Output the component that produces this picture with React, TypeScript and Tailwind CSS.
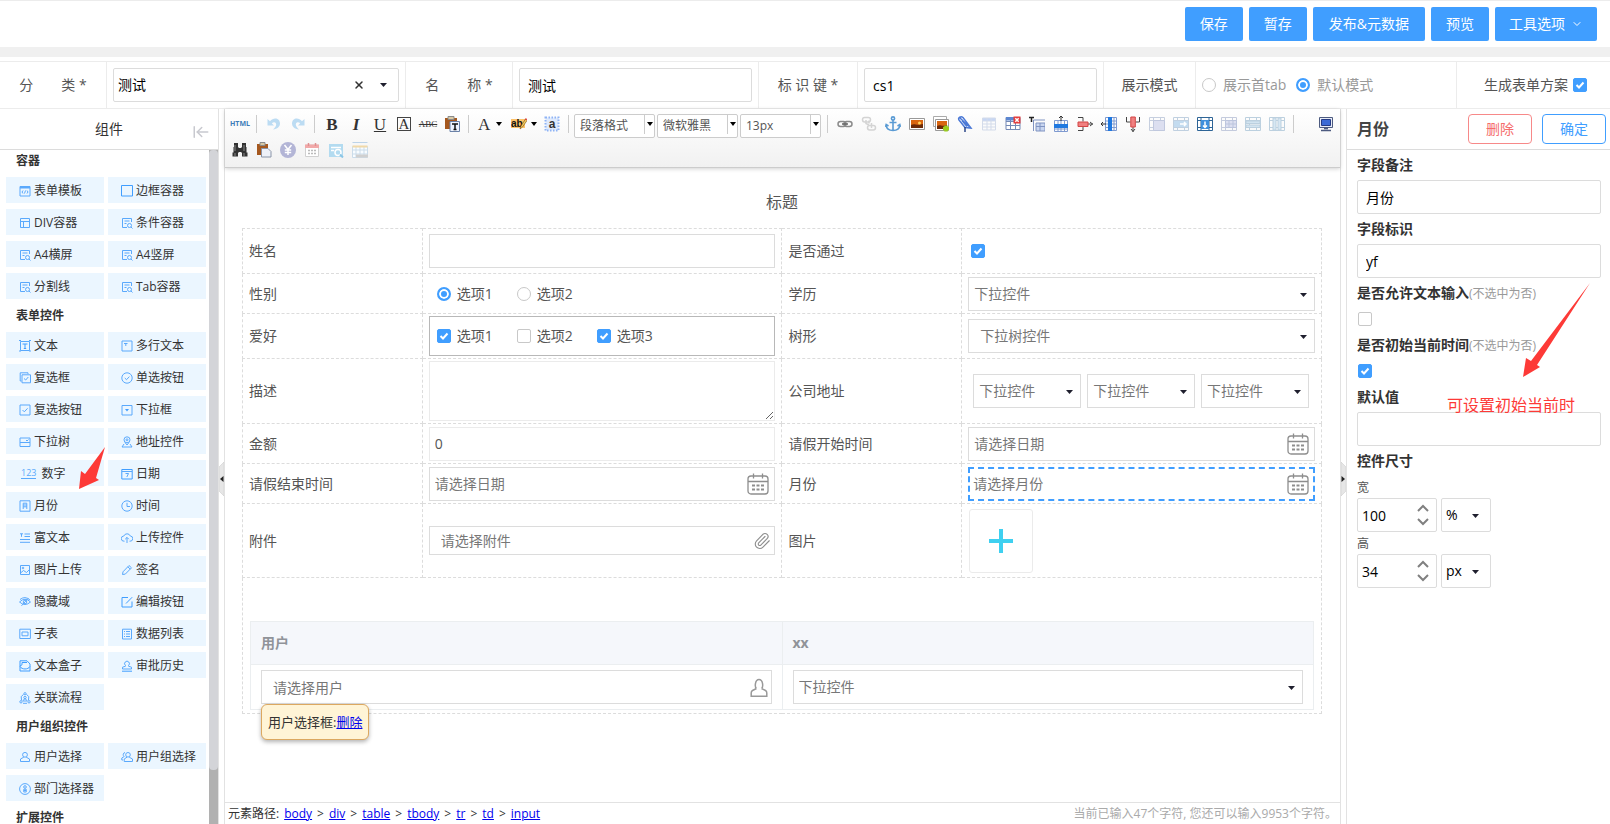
import { useId, useState } from 'react';
import type { ReactNode } from 'react';
import { ArrowLeftToLine, ChevronDown, Paperclip, X } from 'lucide-react';

/* ---------- palette icons (12 x 12 grid) ---------- */

const paletteIcons: Record<string, ReactNode> = {
  template: (
    <>
      <path d="M1 1.5h10v9.5H1z" />
      <path d="M1 2.5h10" strokeWidth="2" />
      <path d="M4 5.5 3 7l1 1.5M8 5.5 9 7 8 8.5M6.5 5.5l-1 3" />
    </>
  ),
  border: <path d="M.5 .5h11v10.5H.5z" stroke="#409eff" />,
  div: <path d="M1.5 1.5h9v9h-9zM1.5 4.5h9M4.5 4.5v6" />,
  query: (
    <>
      <path d="M6 10.5H1.5v-9h9V5" />
      <path d="M3.5 4h5M3.5 6.5h2" />
      <circle cx="8.5" cy="8.5" r="2" />
      <path d="m10 10 1.5 1.5" />
    </>
  ),
  text: (
    <>
      <path d="M1.5 1.5h9v9h-9z" />
      <path d="M0 .5h2M10 .5h2M0 11h2M10 11h2" />
      <path d="M3.5 4h5M6 4v4.500M4.800 8.500h2.400" stroke="#409eff" />
    </>
  ),
  textarea: <path d="M1 1h10v10H1zM3 3.500h3.500M4.800 3.500V6" />,
  checkGroup: <path d="M9 2V.8H1.200V9h1.300M3 2.800h8.500v8H3zM5 6.500 6.700 8l2.600-3" />,
  radio: (
    <>
      <circle cx="6" cy="6" r="5.200" />
      <path d="m3.800 6 1.700 1.700L8.400 4.600" />
    </>
  ),
  check: <path d="M1 1h10v10H1zM3.500 6l1.800 1.800 3.300-3.500" />,
  dropdown: (
    <>
      <path d="M1 1.500h10v9.500H1z" />
      <path d="M4 5h4L6 7.500z" fill="#409eff" stroke="none" />
    </>
  ),
  tree: <path d="M1 2h10v8.500H1zM1 6.500h10M7 4l1 1 1.500-1.500" />,
  address: (
    <>
      <circle cx="6" cy="3.800" r="3" />
      <circle cx="6" cy="3.800" r="1" />
      <path d="M4 6.500 6 9l2-2.500M3 8 1 11h10L9 8" />
    </>
  ),
  date: (
    <>
      <path d="M.8 1.500h10.400V11H.8z" stroke="#409eff" />
      <path d="M1 3.500h10M4.500 5.500h3L5.800 9" />
    </>
  ),
  month: <path d="M1 .8h10v10.400H1zM4.200 9V3.200h3.600V9M4.200 5h3.600M4.200 6.800h3.600" />,
  time: (
    <>
      <circle cx="6" cy="6" r="5.200" />
      <path d="M6 2.800V6.500h3" />
    </>
  ),
  rich: <path d="M1 1.800h3M2.500 1.800v3M5.500 2h5.500M5.500 4.500H11M1 7.500h10M1 10.300h10" />,
  upload: <path d="M3.500 9.200H3A2.600 2.600 0 0 1 2.800 4 3.500 3.500 0 0 1 9.300 4 2.600 2.600 0 0 1 9 9.200h-.5M6 11V5.500M4.200 7.200 6 5.400l1.800 1.800" />,
  image: (
    <>
      <path d="M1.500 1.500h9v9h-9zM1.500 9l3-2.500 3 2 3-3" />
      <circle cx="4" cy="4" r=".8" />
    </>
  ),
  pen: <path d="M1.500 10.500 2 7.800 8 1.500l2.500 2.300-6.200 6.300zM6.800 2.800l2.400 2.300" />,
  hidden: (
    <>
      <path d="M.5 6Q6 .5 11.500 6 6 11 .5 6zM1 3.500Q6-.5 11 4M2.500 9.800 9.500 2" />
      <circle cx="6" cy="6" r="1.800" />
    </>
  ),
  edit: <path d="M11 5.500V11H1V1.500h6M5 7.500 11.200 1.200" stroke="#409eff" />,
  subtable: <path d="M.8 1.200h10.600v9.300H.8zM3 4h6v3.800H3z" />,
  list: <path d="M1.500 1.200h9v9.800h-9zM3 3.500h1M5 3.500h4M3 6h1M5 6h4M3 8.500h1M5 8.500h4" />,
  box: <path d="M4 .8H1V11h10V4L8 .8H4zM1 6l2-1.200V2.500h5M1 6.500C3 9.800 9 9.800 11 6.500" stroke="#409eff" />,
  stamp: (
    <>
      <path d="M4.500 6.200V5.500a2.400 2.400 0 1 1 3 0v.7l3 1V9h-9V7.200z" />
      <path d="M1 11.200h10" stroke="#409eff" />
    </>
  ),
  flow: (
    <>
      <path d="M2.500 8A4.500 4.500 0 0 1 4.500 2.300M9.500 8a4.500 4.500 0 0 0-2-5.700M4 11.300h4" />
      <circle cx="6" cy="1.700" r="1.100" />
      <circle cx="2" cy="9.800" r="1.200" />
      <circle cx="10" cy="9.800" r="1.200" />
      <circle cx="6" cy="5.500" r="1.200" />
      <path d="M4 9c0-2.500 4-2.500 4 0z" />
    </>
  ),
  user: (
    <>
      <circle cx="6" cy="3.800" r="2.400" />
      <path d="M4.800 6.200 1.500 8v2.500h9V8L7.200 6.200" />
    </>
  ),
  users: (
    <>
      <circle cx="7" cy="3.800" r="2.300" />
      <path d="M6 6.200 3.200 8v2.500h8.300V8L8.200 6.200M4 1.500a2.200 2.200 0 0 0-.8 4L.8 7v2H2" />
    </>
  ),
  dept: (
    <>
      <circle cx="6" cy="6" r="5.400" />
      <circle cx="6" cy="4" r="1.300" />
      <path d="M4.800 6.200h2.400V9H4.800zM4.800 7.500h2.400" />
    </>
  ),
};

function PaletteIcon({ name }: { name: string }) {
  if (name === 'number') {
    return <span className="mx-0.5 border-b border-[#5aa9fc] text-[9px] leading-[10px] text-[#5aa9fc]">123</span>;
  }
  return (
    <svg viewBox="0 0 12 12" className="h-3 w-3 shrink-0" fill="none" stroke="#5aa9fc" strokeWidth="1">
      {paletteIcons[name]}
    </svg>
  );
}

const groups: { title: string; items: [string, string][] }[] = [
  {
    title: '容器',
    items: [
      ['template', '表单模板'], ['border', '边框容器'],
      ['div', 'DIV容器'], ['query', '条件容器'],
      ['query', 'A4横屏'], ['query', 'A4竖屏'],
      ['query', '分割线'], ['query', 'Tab容器'],
    ],
  },
  {
    title: '表单控件',
    items: [
      ['text', '文本'], ['textarea', '多行文本'],
      ['checkGroup', '复选框'], ['radio', '单选按钮'],
      ['check', '复选按钮'], ['dropdown', '下拉框'],
      ['tree', '下拉树'], ['address', '地址控件'],
      ['number', '数字'], ['date', '日期'],
      ['month', '月份'], ['time', '时间'],
      ['rich', '富文本'], ['upload', '上传控件'],
      ['image', '图片上传'], ['pen', '签名'],
      ['hidden', '隐藏域'], ['edit', '编辑按钮'],
      ['subtable', '子表'], ['list', '数据列表'],
      ['box', '文本盒子'], ['stamp', '审批历史'],
      ['flow', '关联流程'],
    ],
  },
  {
    title: '用户组织控件',
    items: [['user', '用户选择'], ['users', '用户组选择'], ['dept', '部门选择器']],
  },
  { title: '扩展控件', items: [] },
];

/* ---------- toolbar icons (16 x 16 grid) ---------- */

const cells = 'M1 1.500h14v12H1zM1 5.500h14M1 9.500h14M5.500 1.500v12M10.500 1.500v12';
const film = 'M.5 1.500h15v13H.5zM.5 4.500h15M.5 11.500h15M4.500 1.500v13M11.500 1.500v3M11.500 11.500v3';

const toolIcons: Record<string, ReactNode> = {
  undo: <path d="M1.500 3v6.500H8L5.800 7.300C8 5 11 6.500 10 9.500c-.4 1.500-1.500 2.500-3 4C11.500 13 14 10.500 14 7.500 14 2.500 8 .5 4 5.200z" fill="#bcdcf3" />,
  redo: <path d="M14.500 3v6.500H8l2.200-2.200C8 5 5 6.500 6 9.500c.4 1.500 1.500 2.500 3 4C4.500 13 2 10.500 2 7.500 2 2.500 8 .5 12 5.200z" fill="#bcdcf3" />,
  pasteText: (
    <>
      <path d="M1 2h12v11H1z" fill="#a5581e" />
      <path d="M4 .5h6v3H4z" fill="#d9c9a5" stroke="#8a8a8a" />
      <path d="M6 5.500h9.500v10H6z" fill="#eef4ff" stroke="#6b82a8" />
      <path d="M8 8h6M11 8v5.500M9.500 13.500h3" stroke="#111" strokeWidth="1.500" />
    </>
  ),
  clear: (
    <>
      <path d="M1.500 1.500h13v13h-13z" fill="#dfeafd" stroke="#8fb4f5" strokeWidth="2" strokeDasharray="1.500 1.500" />
      <text x="8" y="12" textAnchor="middle" fontSize="12" fontWeight="bold" fill="#333" fontFamily="Liberation Sans, sans-serif">a</text>
    </>
  ),
  highlight: (
    <>
      <path d="M0 3h14v9H0z" fill="#fdc36b" />
      <text x="0" y="11" fontSize="10" fontWeight="bold" fill="#111" fontFamily="Liberation Sans, sans-serif">ab</text>
      <path d="m9 13 1-3 4.500-7L16 4.500 11.500 11z" fill="#f0d060" stroke="#8a5a1c" strokeWidth=".7" />
      <path d="m14 3 1-1 1 1.500-.8 1z" fill="#d33" />
    </>
  ),
  link: (
    <g fill="none" stroke="#8b8b8b" strokeWidth="1.500">
      <rect x="1" y="5.500" width="8" height="5" rx="2.500" />
      <rect x="7" y="5.500" width="8" height="5" rx="2.500" />
      <path d="M5 8h6" stroke="#666" />
    </g>
  ),
  unlink: (
    <g fill="none" stroke="#d4d4d4" strokeWidth="1.500">
      <rect x="1.500" y="1.500" width="8" height="4.500" rx="2.200" />
      <path d="M5 4v3.500l3 1.500M8 4.500v3" />
      <rect x="6.500" y="9.500" width="8" height="4.500" rx="2.200" />
      <path d="M10.500 7v5" />
    </g>
  ),
  anchor: (
    <g fill="none" stroke="#5a9bd4" strokeWidth="1.600">
      <circle cx="8" cy="2.500" r="1.600" />
      <path d="M8 4v11M4.500 6.500h7M1 9c.5 4 3.500 5.500 7 5.500s6.500-1.500 7-5.500M.5 11 1.200 8.500 3.500 10M15.500 11l-.7-2.500L12.500 10" />
    </g>
  ),
  image: (
    <>
      <path d="M.5 2.500h15v11H.5z" fill="#fff" stroke="#999" />
      <path d="M2 4h12v8H2z" fill="#d9650f" />
      <path d="M2 9c4-2 5 1 12-1v4H2z" fill="#6b2a08" />
      <circle cx="10.500" cy="7" r="1.500" fill="#ffd65c" />
    </>
  ),
  images: (
    <>
      <path d="M.5 .5h13v10H.5z" fill="#fff" stroke="#aaa" />
      <path d="M2.500 3.500h13v11h-13z" fill="#fff" stroke="#999" />
      <path d="M4 5h10v8H4z" fill="#d9650f" />
      <path d="M4 10c4-2 4 1 10-1v4H4z" fill="#6b2a08" />
      <path d="M13 9.500v6M10 12.500h6" stroke="#9acd1c" strokeWidth="3.500" />
    </>
  ),
  attach: (
    <g fill="none" stroke="#4a78d6" strokeWidth="1.500">
      <path d="m3 2 9 8.500M2 4l6 7.500 6 .5L6 1.500C4 0 .5 1.500 2 4zM5 4.500l5 6" />
      <path d="M8 11v5" stroke="#2b4687" />
    </g>
  ),
  table: (
    <>
      <path d="M1.500 2h13v3h-13z" fill="#c6d6f5" />
      <path d="M1.500 2h13v12h-13zM1.500 5h13M1.500 8h13M1.500 11h13M6 2v12M10 2v12" fill="none" stroke="#d3dbea" />
    </>
  ),
  deleteTable: (
    <>
      <path d={cells} fill="#fff" stroke="#7489b5" />
      <path d="M1 1h9v3.500H1z" fill="#5b86d0" />
      <path d="M8.500 .5h7v7h-7z" fill="#e33b3b" />
      <path d="m10.300 2.300 3.400 3.400M13.700 2.300l-3.400 3.400" stroke="#fff" strokeWidth="1.500" />
    </>
  ),
  tableTitle: (
    <>
      <path d="M0 1.500h5M2.500 1.500V6" stroke="#222" strokeWidth="1.500" />
      <path d="M4.500 4h11.500M4.500 4v11M7 7h9v8H7zM7 10.500h9M11 7v8" fill="#c9d6f0" stroke="#8094c2" />
    </>
  ),
  insertRow: (
    <>
      <path d="M1.500 4.500h13v11h-13zM1.500 13h13M5 4.500v11M8 4.500v11M11.500 4.500v11" fill="none" stroke="#7f9ad0" />
      <path d="M1 8h14v4H1z" fill="#1f78e0" />
      <path d="M8 5V0M6 2l2-2 2 2" fill="none" stroke="#333" />
    </>
  ),
  deleteRow: (
    <>
      <path d="M1 1.500h5v4M1 14.500h5v-4M13 6l2.500 2L13 10M11 8h5" fill="none" stroke="#444" />
      <path d="M1 6h10v4.500H1z" fill="#f08080" stroke="#d24545" />
    </>
  ),
  insertCol: (
    <>
      <path d="M4.500 1.500h11v13h-11zM4.500 5h11M4.500 8h11M4.500 11.500h11M13 1.500v13" fill="none" stroke="#7f9ad0" />
      <path d="M7 1h4v14H7z" fill="#1f78e0" />
      <path d="M5 8H0M2 6 0 8l2 2" fill="none" stroke="#333" />
    </>
  ),
  deleteCol: (
    <>
      <path d="M1.500 1v5h4M14.500 1v5h-4M6 13l2 2.500 2-2.500M8 11v5" fill="none" stroke="#444" />
      <path d="M5.800 1h4.500v10H5.800z" fill="#f08080" stroke="#d24545" />
    </>
  ),
  mergeCells: (
    <>
      <path d={film} fill="none" stroke="#c6cfdf" />
      <path d="M4.500 4.500h11v10h-11z" fill="#dcdff0" stroke="#c0c8de" />
    </>
  ),
  mergeRight: (
    <>
      <path d={film} fill="none" stroke="#c0d0e0" />
      <path d="M1 5h14v6H1z" fill="#c3dbef" />
      <path d="M7 8h6M11 6l2 2-2 2" fill="none" stroke="#fff" strokeWidth="1.500" />
    </>
  ),
  mergeDown: (
    <>
      <path d="M.5 1.500h15v13H.5z" fill="#fff" stroke="#2e6496" />
      <path d="M.5 4.500h15M.5 11.500h15M4 1.500v13M12 1.500v13" stroke="#2e6496" />
      <path d="M4 4h8v9H4z" fill="#3f8fdc" />
      <path d="M8 5.500v6M6 9.500l2 2 2-2" fill="none" stroke="#fff" strokeWidth="1.500" />
    </>
  ),
  splitCells: (
    <>
      <path d={film} fill="none" stroke="#c4cbdd" />
      <path d="M4.500 4.500h11v7h-11zM8 4.500v7M12 4.500v7M4.500 8h11" fill="#dcdff0" stroke="#bcc5dd" />
    </>
  ),
  splitRows: (
    <>
      <path d={film} fill="none" stroke="#bcd0df" />
      <path d="M1 5h14v2.500H1zM1 9h14v2.500H1z" fill="#d2e4f1" stroke="#bcd0df" />
    </>
  ),
  splitCols: (
    <>
      <path d={film} fill="none" stroke="#bcd0df" />
      <path d="M4 2h3v12H4zM9 2h3v12H9z" fill="#d6e7f3" stroke="#bcd0df" />
    </>
  ),
  screen: (
    <>
      <path d="M1.500 1.500h13v10h-13z" fill="#e8ecf6" stroke="#4d5b80" />
      <path d="M3.500 3.500h9v6h-9z" fill="#3c6bd6" stroke="#263c86" />
      <path d="M6 12.500h4M3 14.500h10" stroke="#4d5b80" strokeWidth="1.500" />
    </>
  ),
  search: (
    <>
      <path d="M2 1h4v4H2zM10 1h4v4h-4zM6 6h4v4H6zM1.500 5h5v6h-5zM9.500 5h5v6h-5zM.5 10.500h5.500v4H.5zM10 10.500h5.500v4H10z" fill="#333" />
      <path d="M3 11v3M12 11v3M3 3v6M12 3v6" stroke="#888" />
    </>
  ),
  paste: (
    <>
      <path d="M1 2h11v11H1z" fill="#a5581e" />
      <path d="M4 .5h5v3H4z" fill="#d9c9a5" stroke="#8a8a8a" />
      <path d="M5.500 6.500H12l3 3v5.500H5.500z" fill="#eef1f8" stroke="#8a94a8" />
    </>
  ),
  yen: (
    <>
      <circle cx="8" cy="8" r="8" fill="#b3b5d6" />
      <path d="m4.500 3 3.500 4.500L11.500 3M4.800 8h6.400M4.800 10.500h6.400M8 7.500V13" fill="none" stroke="#fff" strokeWidth="1.500" />
    </>
  ),
  calendar: (
    <>
      <path d="M1.500 3h13v11.500h-13z" fill="#fff" stroke="#d0d0d0" />
      <path d="M1 2.500h14V6H1z" fill="#f2a9a9" />
      <path d="M4.500 1v3M11.500 1v3" stroke="#e09090" strokeWidth="1.500" />
      <path d="M4 8.500h2M7 8.500h2M10 8.500h2M4 11.500h2M7 11.500h2M10 11.500h2" stroke="#bbb" strokeWidth="1.500" />
    </>
  ),
  dataSearch: (
    <>
      <path d="M1 2h14v13H1z" fill="#b3dbf0" />
      <path d="M3 5.500h10M3 8.500h3" stroke="#fff" strokeWidth="1.300" />
      <circle cx="10" cy="10.500" r="3" fill="#b3dbf0" stroke="#fff" strokeWidth="1.500" />
      <path d="m12 12.500 3 3" stroke="#8cc6e6" strokeWidth="2" />
    </>
  ),
  tableLink: (
    <>
      <path d="M.5 .5h15" stroke="#bcd3e8" />
      <path d="M.5 4.500h15v11H.5zM.5 8h15M.5 12h15M4 4.500v11M8 4.500v11M12 4.500v11" fill="#f8fcff" stroke="#cbdcea" />
      <path d="M.5 4.500h15" stroke="#f0d9a8" strokeWidth="2" />
      <path d="M4 14h12" stroke="#d0d0d0" strokeWidth="3" />
    </>
  ),
};

function ToolButton({ name, label }: { name: string; label: string }) {
  return (
    <button aria-label={label} className="flex h-6 w-6 items-center justify-center">
      <svg viewBox="0 0 16 16" className="h-4 w-4">{toolIcons[name]}</svg>
    </button>
  );
}

const tableTools: [string, string][] = [
  ['link', '超链接'], ['unlink', '取消链接'], ['anchor', '锚点'], ['image', '单图上传'],
  ['images', '多图上传'], ['attach', '附件'], ['table', '插入表格'], ['deleteTable', '删除表格'],
  ['tableTitle', '表格标题'], ['insertRow', '前插入行'], ['deleteRow', '删除行'], ['insertCol', '前插入列'],
  ['deleteCol', '删除列'], ['mergeCells', '合并单元格'], ['mergeRight', '右合并'], ['mergeDown', '下合并'],
  ['splitCells', '拆分单元格'], ['splitRows', '拆分成行'], ['splitCols', '拆分成列'],
];

/* ---------- small shared pieces ---------- */

function Caret({ className = '' }: { className?: string }) {
  return (
    <svg viewBox="0 0 7 4" className={`pointer-events-none h-1 w-[7px] fill-[#1f1f2e] ${className}`}>
      <path d="M0 0h7L3.500 4z" />
    </svg>
  );
}

function Separator() {
  return <span className="mr-[5px] ml-1 h-[18px] w-px bg-[#ccc]" />;
}

function Check({ label, defaultChecked = false }: { label: string; defaultChecked?: boolean }) {
  return (
    <span className="relative inline-flex h-3.5 w-3.5 shrink-0">
      <input
        type="checkbox"
        aria-label={label}
        defaultChecked={defaultChecked}
        className="peer h-3.5 w-3.5 appearance-none rounded-[2px] border border-[#c8c8c8] bg-white checked:border-[#409eff] checked:bg-[#409eff]"
      />
      <svg viewBox="0 0 14 14" className="pointer-events-none absolute inset-0 hidden peer-checked:block" fill="none" stroke="#fff" strokeWidth="2">
        <path d="m3.500 7 2.500 2.500L10.500 4.500" />
      </svg>
    </span>
  );
}

function Radio({ name, defaultChecked = false }: { name: string; defaultChecked?: boolean }) {
  return (
    <input
      type="radio"
      name={name}
      defaultChecked={defaultChecked}
      className="h-3.5 w-3.5 shrink-0 appearance-none rounded-full border border-[#c8c8c8] bg-white checked:border-2 checked:border-[#409eff] checked:bg-[#409eff] checked:shadow-[inset_0_0_0_2px_#fff]"
    />
  );
}

interface SelectProps {
  label: string;
  value: string;
  className?: string;
  pad?: string;
  id?: string;
}

function Select({ label, value, className = '', pad = 'pl-[5px]', id }: SelectProps) {
  return (
    <div className={`relative h-[34px] ${className}`}>
      <select id={id} aria-label={label} className={`h-full w-full appearance-none border border-[#dcdcdc] bg-white text-sm text-[#777] outline-none ${pad}`}>
        <option>{value}</option>
      </select>
      <Caret className="absolute top-4 right-2" />
    </div>
  );
}

function CalendarIcon() {
  return (
    <svg viewBox="0 0 22 22" className="pointer-events-none absolute top-1.5 right-1.5 h-[22px] w-[22px]" fill="none" stroke="#8e8e8e" strokeWidth="1.300">
      <rect x="1" y="3" width="20" height="18" rx="3" />
      <path d="M1 8.500h20M6.500 .5v5M15.500 .5v5" />
      <path d="M5 12.500h3M9.500 12.500h3M14 12.500h3M5 16.500h3M9.500 16.500h3M14 16.500h3" strokeWidth="2" />
    </svg>
  );
}

function DateInput({ id, placeholder, active = false }: { id: string; placeholder: string; active?: boolean }) {
  return (
    <div className="relative">
      <input
        id={id}
        placeholder={placeholder}
        className={`block h-[34px] w-full text-sm outline-none placeholder:text-[#777] ${
          active ? 'border-2 border-dashed border-[#409eff] pl-[3px]' : 'border border-[#dcdcdc] pl-[5px]'
        }`}
      />
      <CalendarIcon />
    </div>
  );
}

function ToolSelect({ label, value }: { label: string; value: string }) {
  return (
    <div className="relative mr-0.5 h-6 w-[81px]">
      <select aria-label={label} className="h-full w-full appearance-none rounded-[2px] border border-[#ccc] bg-white pl-[5px] text-xs text-[#555] outline-none">
        <option>{value}</option>
      </select>
      <span className="pointer-events-none absolute inset-y-0.5 right-0 flex w-[11px] items-center justify-center border-l border-[#ccc]">
        <svg viewBox="0 0 6 4" className="h-1 w-1.5"><path d="M0 0h6L3 4z" /></svg>
      </span>
    </div>
  );
}

/* ---------- page sections ---------- */

function MetaBar() {
  const label = 'flex shrink-0 items-center justify-center border-r border-[#ececec] whitespace-pre text-[#555]';
  const input = 'h-[34px] w-full min-w-0 rounded-[2px] border border-[#dcdcdc] px-2 text-black outline-none';
  return (
    <div className="flex h-12 shrink-0 border-y border-[#ececec] text-sm">
      <label htmlFor="category" className={`${label} w-[107px]`}>{'分\u3000\u3000类 *'}</label>
      <div className="relative flex min-w-0 flex-[302] items-center border-r border-[#ececec] px-1.5">
        <select id="category" className="h-[34px] w-full appearance-none rounded-[2px] border border-[#dcdcdc] bg-white pl-1 text-black outline-none">
          <option>测试</option>
        </select>
        <button aria-label="清空" className="absolute right-10">
          <X className="h-3 w-3 text-[#333]" strokeWidth={3} />
        </button>
        <Caret className="absolute right-[18px]" />
      </div>
      <label htmlFor="name" className={`${label} w-[107px]`}>{'名\u3000\u3000称 *'}</label>
      <div className="flex min-w-0 flex-[246] items-center border-r border-[#ececec] px-1.5">
        <input id="name" defaultValue="测试" className={input} />
      </div>
      <label htmlFor="key" className={`${label} w-[99px]`}>标 识 键 *</label>
      <div className="flex min-w-0 flex-[246] items-center border-r border-[#ececec] px-1.5">
        <input id="key" defaultValue="cs1" className={input} />
      </div>
      <span className={`${label} w-[92px]`}>展示模式</span>
      <div className="flex w-[261px] shrink-0 items-center gap-2.5 border-r border-[#ececec] px-1.5 text-[#999]">
        <label className="flex items-center gap-[7px]"><Radio name="mode" />展示首tab</label>
        <label className="flex items-center gap-[7px]"><Radio name="mode" defaultChecked />默认模式</label>
      </div>
      <label className="flex w-[153px] shrink-0 items-center justify-end gap-[5px] pr-[23px] text-[#555]">
        生成表单方案
        <Check label="生成表单方案" defaultChecked />
      </label>
    </div>
  );
}

function Palette() {
  return (
    <aside className="relative flex w-[219px] shrink-0 flex-col border-r border-[#e2e2e2]">
      <div className="relative flex h-[41px] shrink-0 items-center justify-center border-b border-[#dcdcdc] text-sm text-[#333]">
        组件
        <button aria-label="收起" className="absolute right-2 bottom-2">
          <ArrowLeftToLine className="h-[18px] w-[18px] text-[#c8c9cf]" strokeWidth={2} />
        </button>
      </div>
      <div className="flex min-h-0 flex-1">
        <div className="flex-1 overflow-hidden pr-[3px] pl-1.5">
          {groups.map((group) => (
            <section key={group.title}>
              <h3 className="mb-[5px] pl-2.5 text-xs leading-[22px] font-bold text-[#333]">{group.title}</h3>
              <div className="mb-1.5 grid grid-cols-2 gap-x-1 gap-y-1.5">
                {group.items.map(([icon, text]) => (
                  <button key={text} draggable className="flex h-[26px] items-center gap-[3px] bg-[#ebf6ff] pt-px pl-[13px] text-xs whitespace-nowrap text-[#333]">
                    <PaletteIcon name={icon} />
                    {text}
                  </button>
                ))}
              </div>
            </section>
          ))}
        </div>
        <div className="w-[9px] bg-[#b1b1b1]">
          <div className="h-[92%] rounded-[4px] bg-[#d3d4d8]" />
        </div>
      </div>
      {/* pointer to the month control */}
      <svg viewBox="0 0 26 42" className="pointer-events-none absolute top-[338px] left-[79px] h-[42px] w-[26px]">
        <path d="M26 0 17 31l3 2L0 42 2 24l4 3z" fill="#fd3a37" />
      </svg>
    </aside>
  );
}

function Sash({ flip = false }: { flip?: boolean }) {
  return (
    <div className="flex w-[5px] shrink-0 items-center">
      <svg viewBox="0 0 5 34" className={`mt-6 h-[34px] w-[5px] ${flip ? '-scale-x-100' : ''}`}>
        <path d="M5 0v34L0 29V5z" fill="#e6e6e6" stroke="#c8c8c8" strokeWidth=".5" />
        <path d="M4.500 14v6L1 17z" fill="#222" />
      </svg>
    </div>
  );
}

function Toolbar() {
  const glyph = 'flex h-6 w-6 items-center justify-center font-["Liberation_Serif",serif] text-[17px] leading-none text-[#333]';
  return (
    <div className="relative shrink-0 border-b border-[#ccc] bg-linear-to-b from-white to-[#f1f1f1] pt-0.5 pr-0.5 pb-1 pl-[3px] shadow-[0_1px_4px_rgba(0,0,0,0.18)]">
      <div className="flex h-[26px] items-center">
        <button className="flex h-6 w-6 items-center justify-center text-[7px] font-bold text-[#3d7db8]">HTML</button>
        <Separator />
        <ToolButton name="undo" label="撤销" />
        <ToolButton name="redo" label="重做" />
        <Separator />
        <button className={`${glyph} font-bold`}>B</button>
        <button className={`${glyph} font-bold italic`}>I</button>
        <button className={`${glyph} underline`}>U</button>
        <button className={glyph}>
          <span className="flex h-3.5 w-3.5 items-center justify-center border border-[#444] text-[15px]">A</span>
        </button>
        <button className={glyph}>
          <span className="text-[9px] line-through">ABC</span>
        </button>
        <ToolButton name="pasteText" label="纯文本粘贴" />
        <Separator />
        <button className="flex h-6 w-[34px] items-center gap-1.5 pl-1 font-['Liberation_Serif',serif] text-[17px] leading-none text-[#333]">
          A
          <svg viewBox="0 0 6 4" className="h-1 w-1.5"><path d="M0 0h6L3 4z" /></svg>
        </button>
        <button aria-label="背景色" className="flex h-6 w-8 items-center gap-1 pl-[3px]">
          <svg viewBox="0 0 16 16" className="h-4 w-4">{toolIcons.highlight}</svg>
          <svg viewBox="0 0 6 4" className="h-1 w-1.5"><path d="M0 0h6L3 4z" /></svg>
        </button>
        <ToolButton name="clear" label="清除格式" />
        <Separator />
        <ToolSelect label="段落格式" value="段落格式" />
        <ToolSelect label="字体" value="微软雅黑" />
        <ToolSelect label="字号" value="13px" />
        <Separator />
        {tableTools.map(([name, label]) => (
          <ToolButton key={name} name={name} label={label} />
        ))}
        <Separator />
        <div className="ml-auto flex">
          <ToolButton name="screen" label="全屏" />
        </div>
      </div>
      <div className="flex h-[26px] items-center">
        <ToolButton name="search" label="查询替换" />
        <ToolButton name="paste" label="粘贴" />
        <ToolButton name="yen" label="金额" />
        <ToolButton name="calendar" label="日历" />
        <ToolButton name="dataSearch" label="数据查询" />
        <ToolButton name="tableLink" label="关联表格" />
      </div>
    </div>
  );
}

function FormRow({ height, cells: rowCells }: { height: string; cells: [string, string, ReactNode][] }) {
  return (
    <tr className={height}>
      {rowCells.map(([text, id, control]) => [
        <td key={`${id}-label`} className="w-1/6 border border-dashed border-[#dcdcdc] px-1.5 text-[#555]">
          <label htmlFor={id}>{text}</label>
        </td>,
        <td key={id} className="w-1/3 border border-dashed border-[#dcdcdc] px-1.5">{control}</td>,
      ])}
    </tr>
  );
}

function FormCanvas() {
  const input = 'block h-[34px] w-full border border-[#dcdcdc] outline-none placeholder:text-[#777]';
  const option = 'flex items-center gap-1.5 text-[#555]';
  return (
    <div className="min-h-0 flex-1 overflow-hidden pt-5 pr-[18px] pl-[17px] text-sm">
      <h2 className="mb-3 text-center text-base leading-7 text-[#555]">标题</h2>
      <table className="w-full table-fixed border-collapse">
        <tbody>
          <FormRow
            height="h-[45px]"
            cells={[
              ['姓名', 'f-name', <input id="f-name" className={input} />],
              ['是否通过', 'f-pass', <span className="flex pl-[3px]"><Check label="是否通过" defaultChecked /></span>],
            ]}
          />
          <FormRow
            height="h-10"
            cells={[
              [
                '性别',
                'f-sex',
                <div id="f-sex" className="flex gap-6 pl-2">
                  <label className={option}><Radio name="sex" defaultChecked />选项1</label>
                  <label className={option}><Radio name="sex" />选项2</label>
                </div>,
              ],
              ['学历', 'f-edu', <Select id="f-edu" label="学历" value="下拉控件" />],
            ]}
          />
          <FormRow
            height="h-[45px]"
            cells={[
              [
                '爱好',
                'f-hobby',
                <div id="f-hobby" className="flex h-10 items-center gap-6 border border-[#b8b8b8] pl-[7px]">
                  <label className={option}><Check label="选项1" defaultChecked />选项1</label>
                  <label className={option}><Check label="选项2" />选项2</label>
                  <label className={option}><Check label="选项3" defaultChecked />选项3</label>
                </div>,
              ],
              ['树形', 'f-tree', <Select id="f-tree" label="树形" value="下拉树控件" pad="pl-[11px]" />],
            ]}
          />
          <FormRow
            height="h-[65px]"
            cells={[
              ['描述', 'f-desc', <textarea id="f-desc" className="block h-[60px] w-full resize border border-[#ebebeb] outline-none" />],
              [
                '公司地址',
                'f-addr',
                <div className="flex gap-1.5 pr-1.5 pl-[5px]">
                  <Select id="f-addr" label="省" value="下拉控件" className="flex-1" />
                  <Select label="市" value="下拉控件" className="flex-1" />
                  <Select label="区" value="下拉控件" className="flex-1" />
                </div>,
              ],
            ]}
          />
          <FormRow
            height="h-10"
            cells={[
              ['金额', 'f-amount', <input id="f-amount" defaultValue="0" className="block h-[34px] w-full border border-[#ebebeb] pl-[5px] text-[#555] outline-none" />],
              ['请假开始时间', 'f-start', <DateInput id="f-start" placeholder="请选择日期" />],
            ]}
          />
          <FormRow
            height="h-10"
            cells={[
              ['请假结束时间', 'f-end', <DateInput id="f-end" placeholder="请选择日期" />],
              ['月份', 'f-month', <DateInput id="f-month" placeholder="请选择月份" active />],
            ]}
          />
          <FormRow
            height="h-[74px]"
            cells={[
              [
                '附件',
                'f-file',
                <div className="relative">
                  <input id="f-file" placeholder="请选择附件" className="block h-[29px] w-full border border-[#dcdcdc] pl-[11px] outline-none placeholder:text-[#777]" />
                  <Paperclip className="pointer-events-none absolute top-1.5 right-1 h-[18px] w-[18px] text-[#8e8e8e]" strokeWidth={1.5} />
                </div>,
              ],
              [
                '图片',
                'f-image',
                <button id="f-image" aria-label="上传图片" className="ml-px flex h-16 w-16 items-center justify-center rounded-[3px] border border-[#ebebeb]">
                  <svg viewBox="0 0 24 24" className="h-6 w-6" stroke="#3fd0f0" strokeWidth="4"><path d="M12 0v24M0 12h24" /></svg>
                </button>,
              ],
            ]}
          />
          <tr className="h-[136px]">
            <td colSpan={4} className="border border-dashed border-[#dcdcdc] px-[7px] pb-[3px] align-bottom">
              <table className="w-full table-fixed border-collapse text-left">
                <thead>
                  <tr className="h-[43px] bg-[#f5f7fb] text-[#909399]">
                    <th className="border border-[#ebeef0] px-2.5 font-bold">用户</th>
                    <th className="border border-[#ebeef0] px-2.5 font-bold">xx</th>
                  </tr>
                </thead>
                <tbody>
                  <tr className="h-[45px]">
                    <td className="border border-[#ebeef0] px-2.5">
                      <div className="relative">
                        <input aria-label="用户" placeholder="请选择用户" className={`${input} pl-[11px]`} />
                        <svg viewBox="0 0 18 20" className="pointer-events-none absolute top-2 right-1 h-5 w-[18px]" fill="none" stroke="#999" strokeWidth="1.500">
                          <path d="M6.500 10.500C4.500 9 5 1.500 9 1.500s4.500 7.500 2.500 9M6.500 10.500 2.500 12.500C1.500 13 1.200 14 1.200 15v3.200h15.600V15c0-1-.3-2-1.300-2.500l-4-2" />
                        </svg>
                        <div className="absolute top-[34px] left-0 flex h-9 items-center rounded-md border border-[#dca860] bg-[#fff4d6] px-1.5 text-[13px] whitespace-nowrap text-[#333] shadow-[0_2px_4px_rgba(0,0,0,0.3)]">
                          用户选择框:<a href="#delete" className="text-[#0000ee] underline">删除</a>
                        </div>
                      </div>
                    </td>
                    <td className="border border-[#ebeef0] px-2.5">
                      <Select label="xx" value="下拉控件" />
                    </td>
                  </tr>
                </tbody>
              </table>
            </td>
          </tr>
        </tbody>
      </table>
    </div>
  );
}

function PathBar() {
  const path = ['body', 'div', 'table', 'tbody', 'tr', 'td', 'input'];
  return (
    <footer className="flex h-[22px] shrink-0 items-center justify-between border-t border-[#e2e2e2] px-[3px] text-xs text-[#333]">
      <div className="flex gap-[5px]">
        元素路径:
        {path.map((tag, i) => (
          <span key={tag} className="flex gap-[5px]">
            {i > 0 && <span>&gt;</span>}
            <a href={`#${tag}`} className="text-[#0000ee] underline">{tag}</a>
          </span>
        ))}
      </div>
      <span className="text-[#aaa]">当前已输入47个字符, 您还可以输入9953个字符。</span>
    </footer>
  );
}

function SizeField({ label, value, unit }: { label: string; value: number; unit: string }) {
  const [size, setSize] = useState(value);
  const id = useId();
  return (
    <>
      <label htmlFor={id} className="block pt-0.5 text-xs leading-5 text-[#555]">{label}</label>
      <div className="flex gap-1">
        <div className="relative h-[34px] w-20">
          <input
            id={id}
            value={size}
            onChange={(e) => setSize(Number(e.target.value) || 0)}
            className="h-full w-full rounded-[2px] border border-[#dcdcdc] pl-1 text-sm text-black outline-none"
          />
          <span className="absolute inset-y-0 right-2 flex flex-col justify-center gap-1.5">
            <button aria-label="增加" onClick={() => setSize(size + 1)}>
              <svg viewBox="0 0 12 8" className="h-2 w-3" fill="none" stroke="#808080" strokeWidth="2"><path d="m1 7 5-5 5 5" /></svg>
            </button>
            <button aria-label="减少" onClick={() => setSize(size - 1)}>
              <svg viewBox="0 0 12 8" className="h-2 w-3" fill="none" stroke="#808080" strokeWidth="2"><path d="m1 1 5 5 5-5" /></svg>
            </button>
          </span>
        </div>
        <div className="relative h-[34px] w-[50px]">
          <select aria-label={`${label}单位`} className="h-full w-full appearance-none rounded-[2px] border border-[#dcdcdc] bg-white pl-1 text-sm text-black outline-none">
            <option>{unit}</option>
          </select>
          <Caret className="absolute top-4 right-3" />
        </div>
      </div>
    </>
  );
}

function PropertyPanel() {
  const title = 'block text-sm leading-[30px] font-bold text-[#333]';
  const input = 'block h-[34px] w-full rounded-[2px] border border-[#dcdcdc] px-2 text-sm text-black outline-none';
  return (
    <aside className="relative w-[264px] shrink-0 border-l border-[#e2e2e2]">
      <div className="flex h-[41px] items-center border-b border-[#dcdcdc] pr-1 pl-[10px]">
        <h2 className="text-base font-bold text-[#444]">月份</h2>
        <button className="ml-auto h-[30px] w-16 rounded border border-[#f78989] text-sm text-[#f56c6c]">删除</button>
        <button className="ml-2.5 h-[30px] w-16 rounded border border-[#409eff] text-sm text-[#409eff]">确定</button>
      </div>
      <div className="pr-[9px] pl-[10px]">
        <label htmlFor="p-remark" className={title}>字段备注</label>
        <input id="p-remark" defaultValue="月份" className={input} />
        <label htmlFor="p-key" className={title}>字段标识</label>
        <input id="p-key" defaultValue="yf" className={input} />
        <span className={title}>是否允许文本输入<span className="text-xs font-normal text-[#999]">(不选中为否)</span></span>
        <div className="flex h-[22px] items-center pl-px"><Check label="是否允许文本输入" /></div>
        <span className={title}>是否初始当前时间<span className="text-xs font-normal text-[#999]">(不选中为否)</span></span>
        <div className="flex h-[22px] items-center pl-px"><Check label="是否初始当前时间" defaultChecked /></div>
        <label htmlFor="p-default" className={title}>默认值</label>
        <input id="p-default" className={input} />
        <h3 className={title}>控件尺寸</h3>
        <SizeField label="宽" value={100} unit="%" />
        <SizeField label="高" value={34} unit="px" />
      </div>
      {/* annotation */}
      <svg viewBox="0 0 67 94" className="pointer-events-none absolute top-[174px] left-[176px] h-[94px] w-[67px]">
        <path d="M67 0 14 82l3 2L0 94 3 75l5 3z" fill="#fd3a37" />
      </svg>
      <p className="pointer-events-none absolute top-[284px] left-[100px] text-base text-[#fd3a37]">可设置初始当前时</p>
    </aside>
  );
}

export default function App() {
  const button = 'h-[34px] rounded-[2px] bg-[#409eff] text-sm text-white';
  return (
    <div className="flex h-screen flex-col overflow-hidden bg-white font-['Open_Sans','Noto_Sans_CJK_SC',sans-serif]">
      <header className="flex h-[47px] shrink-0 items-center justify-end gap-1.5 border-t border-[#ececec] pr-[13px]">
        <button className={`${button} px-[15px]`}>保存</button>
        <button className={`${button} px-[15px]`}>暂存</button>
        <button className={`${button} px-4`}>发布&amp;元数据</button>
        <button className={`${button} px-[15px]`}>预览</button>
        <button className={`${button} flex items-center gap-1.5 px-3.5`}>
          工具选项
          <ChevronDown className="h-3 w-3" />
        </button>
      </header>
      <div className="mb-1 h-2.5 shrink-0 bg-[#f0f0f0]" />
      <MetaBar />
      <div className="flex min-h-0 flex-1">
        <Palette />
        <Sash />
        <main className="flex min-w-0 flex-1 flex-col border-x border-[#e2e2e2]">
          <Toolbar />
          <FormCanvas />
          <PathBar />
        </main>
        <Sash flip />
        <PropertyPanel />
      </div>
    </div>
  );
}
